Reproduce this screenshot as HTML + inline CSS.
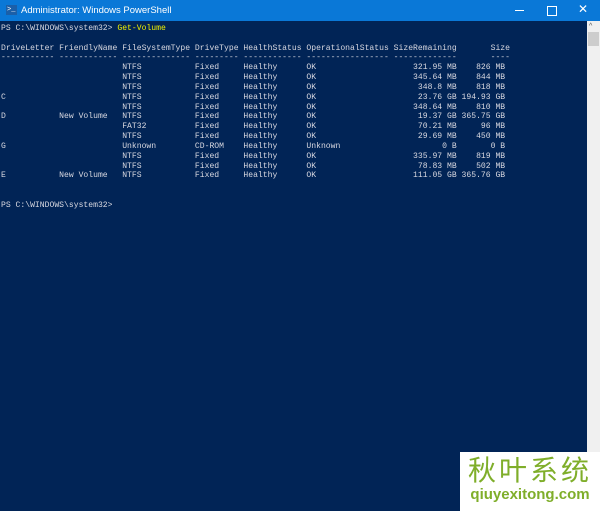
<!DOCTYPE html>
<html><head><style>
*{margin:0;padding:0}
body{width:600px;height:511px;overflow:hidden;background:#012456;position:relative;font-family:"Liberation Sans",sans-serif}
#tb{position:absolute;left:0;top:0;width:600px;height:21px;background:#0a78d7;color:#fff;font-size:9.5px}
#tb .t{position:absolute;left:21px;top:5px}
#tb .ic{position:absolute;left:6px;top:5px;width:11px;height:10px;background:#1b5fa8;color:#fff;font-size:7px;line-height:10px;font-family:"Liberation Mono",monospace;padding-left:1px;box-sizing:border-box}
#con{position:absolute;left:1px;top:24px;font-family:"Liberation Mono",monospace;font-size:8.08px;line-height:9.83px;color:#d8d8e0;white-space:pre}
.y{color:#f0f000}
#sb{position:absolute;left:587px;top:21px;width:13px;height:490px;background:#f0f0f0}
#th{position:absolute;left:588px;top:32px;width:11px;height:14px;background:#cdcdcd}
#wm{position:absolute;left:460px;top:452px;width:140px;height:59px;background:#fff;text-align:center;color:#7fae2a}
</style></head><body>
<div id="tb"><div class="ic">&gt;_</div><div class="t">Administrator: Windows PowerShell</div>
<div style="position:absolute;left:515px;top:10px;width:9px;height:1px;background:#fff"></div>
<div style="position:absolute;left:547px;top:6px;width:8px;height:8px;border:1px solid #fff"></div>
<div style="position:absolute;left:578px;top:2px;font-size:12px">✕</div></div>
<div id="con">PS C:\WINDOWS\system32&gt; <span class="y">Get-Volume</span>

DriveLetter FriendlyName FileSystemType DriveType HealthStatus OperationalStatus SizeRemaining       Size
----------- ------------ -------------- --------- ------------ ----------------- -------------       ----
                         NTFS           Fixed     Healthy      OK                    321.95 MB    826 MB
                         NTFS           Fixed     Healthy      OK                    345.64 MB    844 MB
                         NTFS           Fixed     Healthy      OK                     348.8 MB    818 MB
C                        NTFS           Fixed     Healthy      OK                     23.76 GB 194.93 GB
                         NTFS           Fixed     Healthy      OK                    348.64 MB    810 MB
D           New Volume   NTFS           Fixed     Healthy      OK                     19.37 GB 365.75 GB
                         FAT32          Fixed     Healthy      OK                     70.21 MB     96 MB
                         NTFS           Fixed     Healthy      OK                     29.69 MB    450 MB
G                        Unknown        CD-ROM    Healthy      Unknown                     0 B       0 B
                         NTFS           Fixed     Healthy      OK                    335.97 MB    819 MB
                         NTFS           Fixed     Healthy      OK                     78.83 MB    502 MB
E           New Volume   NTFS           Fixed     Healthy      OK                    111.05 GB 365.76 GB


PS C:\WINDOWS\system32&gt;</div>
<div id="sb"></div><div id="th"></div>
<div style="position:absolute;left:589px;top:23px;font-size:7px;color:#555">^</div>
<div id="wm"><div style="font-family:'Noto Sans CJK SC',sans-serif;font-size:28px;line-height:34px;letter-spacing:3px">秋叶系统</div><div style="font-size:15px;line-height:18px;font-weight:bold">qiuyexitong.com</div></div>
</body></html>
